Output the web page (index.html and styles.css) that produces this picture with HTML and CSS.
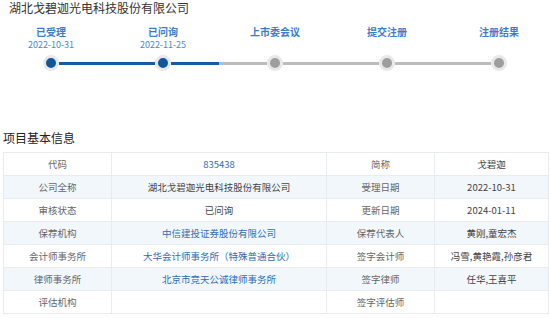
FILE: index.html
```html
<!DOCTYPE html>
<html lang="zh-CN">
  <head>
    <meta charset="UTF-8" />
    <meta name="viewport" content="width=device-width, initial-scale=1.0" />
    <title>项目基本信息</title>
    <link rel="stylesheet" href="styles.css">
  </head>
  <body>
    <h1 class="company">湖北戈碧迦光电科技股份有限公司</h1>

    <!-- 审核进度 -->
    <div class="steps">
      <div class="step done">
        <div class="step-name">已受理</div>
        <div class="step-date">2022-10-31</div>
      </div>
      <div class="step done">
        <div class="step-name">已问询</div>
        <div class="step-date">2022-11-25</div>
      </div>
      <div class="step">
        <div class="step-name">上市委会议</div>
        <div class="step-date"></div>
      </div>
      <div class="step">
        <div class="step-name">提交注册</div>
        <div class="step-date"></div>
      </div>
      <div class="step">
        <div class="step-name">注册结果</div>
        <div class="step-date"></div>
      </div>
    </div>

    <div class="track">
      <span class="dot active"></span>
      <span class="seg active"></span>
      <span class="dot active"></span>
      <span class="seg half"></span>
      <span class="dot"></span>
      <span class="seg"></span>
      <span class="dot"></span>
      <span class="seg"></span>
      <span class="dot"></span>
    </div>

    <!-- 项目基本信息 -->
    <h2 class="section-title">项目基本信息</h2>
    <table class="info">
      <tr>
        <td class="label">代码</td>
        <td><a class="link" href="#">835438</a></td>
        <td class="label">简称</td>
        <td>戈碧迦</td>
      </tr>
      <tr>
        <td class="label">公司全称</td>
        <td>湖北戈碧迦光电科技股份有限公司</td>
        <td class="label">受理日期</td>
        <td>2022-10-31</td>
      </tr>
      <tr>
        <td class="label">审核状态</td>
        <td>已问询</td>
        <td class="label">更新日期</td>
        <td>2024-01-11</td>
      </tr>
      <tr>
        <td class="label">保荐机构</td>
        <td><a class="link" href="#">中信建投证券股份有限公司</a></td>
        <td class="label">保荐代表人</td>
        <td>黄刚,童宏杰</td>
      </tr>
      <tr>
        <td class="label">会计师事务所</td>
        <td><a class="link" href="#">大华会计师事务所（特殊普通合伙）</a></td>
        <td class="label">签字会计师</td>
        <td>冯雪,黄艳霞,孙彦君</td>
      </tr>
      <tr>
        <td class="label">律师事务所</td>
        <td><a class="link" href="#">北京市竞天公诚律师事务所</a></td>
        <td class="label">签字律师</td>
        <td>任华,王喜平</td>
      </tr>
      <tr>
        <td class="label">评估机构</td>
        <td></td>
        <td class="label">签字评估师</td>
        <td></td>
      </tr>
    </table>
  </body>
</html>
```

FILE: styles.css
```css
* {
  box-sizing: border-box;
  margin: 0;
  padding: 0;
}

body {
  font-family: "Noto Sans CJK SC", "Noto Sans", sans-serif;
  background-color: #fff;
  color: #333;
  width: 550px;
  overflow: hidden;
}

.company {
  font-size: 12px;
  font-weight: 400;
  line-height: 15px;
  padding-left: 9px;
  color: #333;
}

/* 进度条 */
.steps {
  display: flex;
  gap: 52px;
  padding-left: 21px;
  margin-top: 10px;
}

.step {
  width: 60px;
  text-align: center;
}

.step-name {
  font-size: 10px;
  font-weight: 700;
  line-height: 13px;
  height: 13px;
  color: #3b7dcc;
  white-space: nowrap;
}

.step-date {
  font-size: 9px;
  line-height: 13px;
  height: 13px;
  color: #4a88d6;
}

.track {
  display: flex;
  align-items: center;
  height: 16px;
  margin-top: 4px;
  padding-left: 43px;
}

.dot {
  width: 16px;
  height: 16px;
  border-radius: 50%;
  border: 3px solid #e8e8e8;
  background-color: #9e9e9e;
  flex-shrink: 0;
}

.dot.active {
  background-color: #0d56a3;
}

.seg {
  width: 96px;
  height: 3px;
  background-color: #bcbcbc;
}

.seg.active {
  background-color: #155ca8;
}

.seg.half {
  background: linear-gradient(to right, #155ca8 50%, #bcbcbc 50%);
}

/* 基本信息 */
.section-title {
  font-size: 12px;
  font-weight: 400;
  line-height: 16px;
  margin-top: 59px;
  padding-left: 3px;
  color: #222;
}

.info {
  width: 546px;
  margin: 6px 0 0 3px;
  border-collapse: collapse;
  table-layout: fixed;
  font-size: 9.5px;
}

.info td {
  height: 23px;
  border: 1px solid #e9ecef;
  text-align: center;
  color: #444;
  white-space: nowrap;
  overflow: hidden;
}

.info td:nth-child(1),
.info td:nth-child(3) {
  width: 108px;
}

.info td:nth-child(2) {
  width: 215px;
}

.info tr:nth-child(even) td {
  background-color: #f2f7fc;
}

.info td.label {
  color: #666;
}

.link {
  color: #2f6db5;
  text-decoration: none;
}
```
